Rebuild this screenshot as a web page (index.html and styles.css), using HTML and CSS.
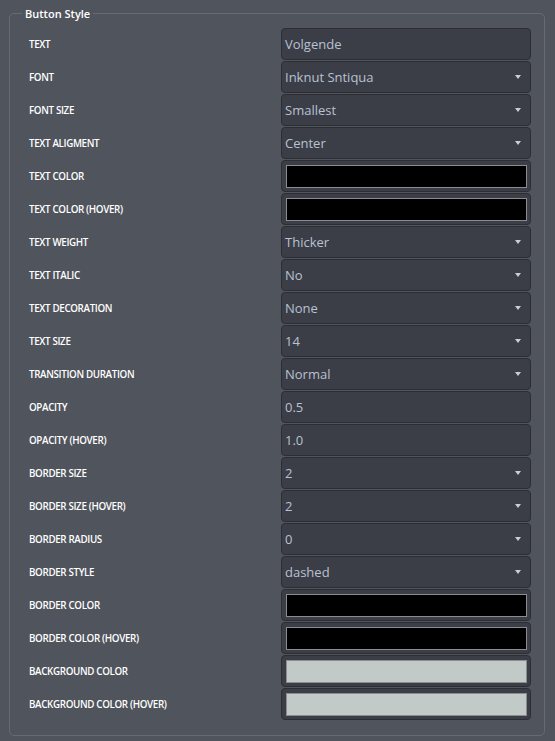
FILE: index.html
```html
<!DOCTYPE html>
<html>
<head>
<meta charset="utf-8">
<link rel="stylesheet" href="styles.css">
</head>
<body>
<fieldset class="panel">
  <legend class="panel-title">Button Style</legend>
  <div class="rows">
    <div class="row"><span class="label">TEXT</span><div class="field"><span class="value">Volgende</span></div></div>
    <div class="row"><span class="label">FONT</span><div class="field select"><span class="value">Inknut Sntiqua</span><span class="caret"></span></div></div>
    <div class="row"><span class="label">FONT SIZE</span><div class="field select"><span class="value">Smallest</span><span class="caret"></span></div></div>
    <div class="row"><span class="label">TEXT ALIGMENT</span><div class="field select"><span class="value">Center</span><span class="caret"></span></div></div>
    <div class="row"><span class="label">TEXT COLOR</span><div class="field color"><span class="swatch black"></span></div></div>
    <div class="row"><span class="label">TEXT COLOR (HOVER)</span><div class="field color"><span class="swatch black"></span></div></div>
    <div class="row"><span class="label">TEXT WEIGHT</span><div class="field select"><span class="value">Thicker</span><span class="caret"></span></div></div>
    <div class="row"><span class="label">TEXT ITALIC</span><div class="field select"><span class="value">No</span><span class="caret"></span></div></div>
    <div class="row"><span class="label">TEXT DECORATION</span><div class="field select"><span class="value">None</span><span class="caret"></span></div></div>
    <div class="row"><span class="label">TEXT SIZE</span><div class="field select"><span class="value">14</span><span class="caret"></span></div></div>
    <div class="row"><span class="label">TRANSITION DURATION</span><div class="field select"><span class="value">Normal</span><span class="caret"></span></div></div>
    <div class="row"><span class="label">OPACITY</span><div class="field"><span class="value">0.5</span></div></div>
    <div class="row"><span class="label">OPACITY (HOVER)</span><div class="field"><span class="value">1.0</span></div></div>
    <div class="row"><span class="label">BORDER SIZE</span><div class="field select"><span class="value">2</span><span class="caret"></span></div></div>
    <div class="row"><span class="label">BORDER SIZE (HOVER)</span><div class="field select"><span class="value">2</span><span class="caret"></span></div></div>
    <div class="row"><span class="label">BORDER RADIUS</span><div class="field select"><span class="value">0</span><span class="caret"></span></div></div>
    <div class="row"><span class="label">BORDER STYLE</span><div class="field select"><span class="value">dashed</span><span class="caret"></span></div></div>
    <div class="row"><span class="label">BORDER COLOR</span><div class="field color"><span class="swatch black"></span></div></div>
    <div class="row"><span class="label">BORDER COLOR (HOVER)</span><div class="field color"><span class="swatch black"></span></div></div>
    <div class="row"><span class="label">BACKGROUND COLOR</span><div class="field color"><span class="swatch grey"></span></div></div>
    <div class="row"><span class="label">BACKGROUND COLOR (HOVER)</span><div class="field color"><span class="swatch grey"></span></div></div>
  </div>
</fieldset>
</body>
</html>
```

FILE: styles.css
```css
html, body {
  margin: 0;
  padding: 0;
  background: #50545c;
  height: 100%;
}
body {
  font-family: "Open Sans", "Noto Sans", sans-serif;
  padding: 6px 10px 0 9px;
  box-sizing: border-box;
}
.panel {
  margin: 0;
  border: 1px solid #666a72;
  border-radius: 5px;
  padding: 7px 13px 15px 19px;
  min-width: 0;
}
.panel-title {
  color: #ffffff;
  font-size: 11px;
  font-weight: 600;
  padding: 0 3px;
  margin-left: -7px;
  line-height: 15px;
}
.rows {
  display: flex;
  flex-direction: column;
  gap: 1px;
}
.row {
  display: grid;
  grid-template-columns: 252px 250px;
  align-items: center;
  height: 32px;
}
.label {
  color: #ffffff;
  font-size: 9.8px;
  font-weight: 600;
  letter-spacing: -0.35px;
}
.field {
  box-sizing: border-box;
  height: 32px;
  background: #3b3e46;
  border: 1px solid #2c2e33;
  border-radius: 4px;
  display: flex;
  align-items: center;
  padding: 0 3px;
}
.value {
  color: #b9c1d2;
  font-size: 13px;
  flex: 1;
}
.caret {
  width: 0;
  height: 0;
  border-left: 3.5px solid transparent;
  border-right: 3.5px solid transparent;
  border-top: 4.5px solid #c9ced8;
  margin-right: 6px;
}
.field.color {
  padding: 0 3px 0 4px;
}
.swatch {
  flex: 1;
  height: 23px;
  box-sizing: border-box;
  border: 1px solid #8a8c90;
}
.swatch.black { background: #000000; }
.swatch.grey { background: #c2cac8; }
```
